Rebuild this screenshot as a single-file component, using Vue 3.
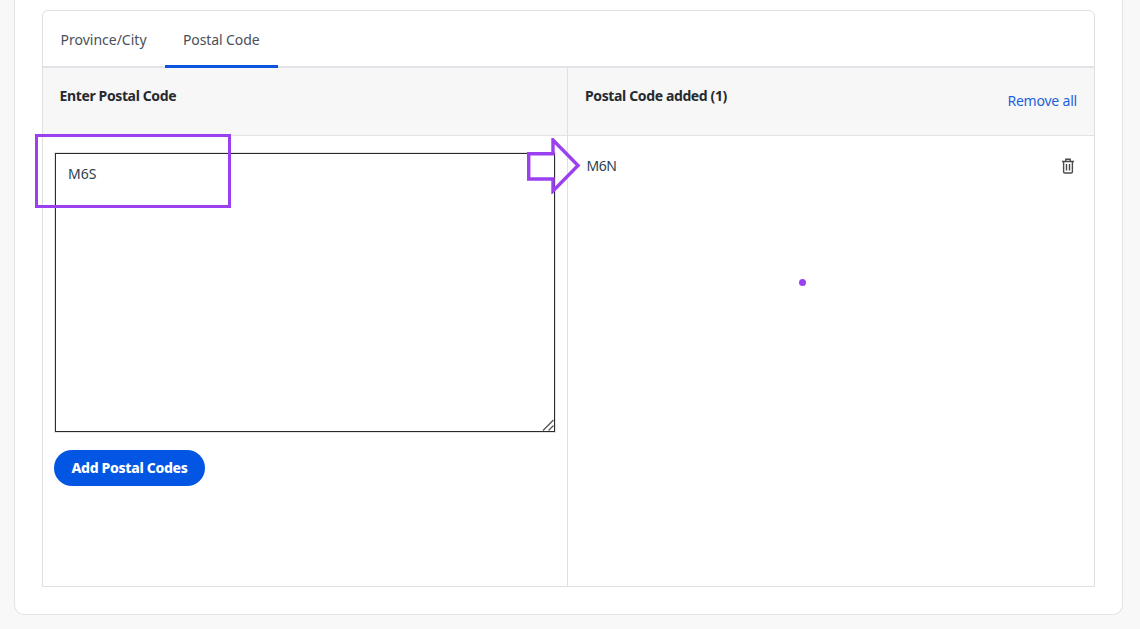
<script setup>
import { ref } from 'vue'
const draft = ref('M6S')
const added = ref(['M6N'])
</script>

<template>
  <div class="page">
    <section class="outer">
      <div class="inner">
        <nav class="tabs">
          <span class="tab first">Province/City</span>
          <span class="tab active">Postal Code</span>
        </nav>
        <div class="cols">
          <div class="col left">
            <header class="head"><strong>Enter Postal Code</strong></header>
            <div class="body">
              <div class="area-wrap">
                <textarea v-model="draft" class="area"></textarea>
                <svg class="grip" width="12" height="12" viewBox="0 0 12 12" fill="none" stroke="#555" stroke-width="1.3">
                  <path d="M1 11.5 11.5 1M6.5 11.5l5-5" />
                </svg>
              </div>
              <button class="add">Add Postal Codes</button>
            </div>
          </div>
          <div class="col right">
            <header class="head">
              <strong>Postal Code added (1)</strong>
              <a class="remove">Remove all</a>
            </header>
            <ul class="list">
              <li v-for="code in added" :key="code" class="row">
                <span class="code">{{ code }}</span>
                <svg class="trash" width="14" height="16" viewBox="0 0 14 16" fill="none" stroke="#4a4a4a" stroke-width="1.4">
                  <path d="M1 3.5h12M4.8 3.3V1.2h4.4v2.1M2.6 3.5v10.2c0 .8.5 1.3 1.3 1.3h6.2c.8 0 1.3-.5 1.3-1.3V3.5M5.5 6v6.5M8.5 6v6.5" />
                </svg>
              </li>
            </ul>
          </div>
        </div>
      </div>
    </section>
    <div class="mark box"></div>
    <svg class="mark arrow" width="54" height="56" viewBox="0 0 54 56" fill="none">
      <path d="M1.7 15.7H26V2L51 27.5 26 53V41H1.7Z" stroke="#9b40f0" stroke-width="3.4" />
    </svg>
    <div class="mark dot"></div>
  </div>
</template>

<style>
html, body { margin: 0; background: #f8f8f8; }
</style>

<style scoped>
.page {
  position: relative;
  height: 629px;
  overflow: hidden;
  box-sizing: border-box;
  padding: 0 17px 0 14px;
  font-family: "Noto Sans", "Open Sans", sans-serif;
  font-size: 14px;
  color: #2b2f36;
}
.outer {
  box-sizing: border-box;
  height: 615px;
  padding: 10px 27px 27px;
  background: #fff;
  border: 1px solid #e3e3e8;
  border-top: 0;
  border-radius: 0 0 10px 10px;
}
.inner {
  display: flex;
  flex-direction: column;
  height: 100%;
  box-sizing: border-box;
  border: 1px solid #e0e0e0;
  border-radius: 6px 6px 0 0;
}
.tabs {
  display: flex;
  height: 57px;
  box-sizing: border-box;
  border-bottom: 2px solid #e2e2e8;
}
.tab {
  padding: 0 18px;
  line-height: 57px;
  height: 57px;
  box-sizing: border-box;
  font-size: 14px;
  color: #4a4f5a;
  letter-spacing: -0.1px;
  white-space: nowrap;
}
.tab.first {
  flex: 0 0 122px;
  padding: 0 0 0 17.5px;
  letter-spacing: 0;
}
.tab.active {
  flex: 0 0 112px;
  border-bottom: 3px solid #0b55dc;
}
.cols {
  flex: 1;
  display: grid;
  grid-template-columns: 524px 1fr;
}
.col { display: flex; flex-direction: column; min-width: 0; }
.right { border-left: 1px solid #e0e0e0; }
.head {
  display: flex;
  justify-content: space-between;
  box-sizing: border-box;
  height: 68px;
  padding: 18px 17px 0 17px;
  background: #f7f7f7;
  border-bottom: 1px solid #e3e3e3;
  font-size: 14px;
  color: #262a30;
}
.left .head { padding-left: 16.5px; }
.head strong { font-weight: 700; line-height: 20px; letter-spacing: -0.37px; }
.remove { margin-top: 5px; color: #1c62dc; line-height: 20px; font-size: 14px; letter-spacing: -0.2px; }
.body { padding: 17px 12px 0 12px; display: flex; flex-direction: column; align-items: flex-start; }
.area-wrap { position: relative; width: 500px; height: 279px; }
.area {
  display: block;
  box-sizing: border-box;
  width: 100%;
  height: 100%;
  padding: 10px 12px;
  border: 1px solid #2b2b2b;
  box-shadow: 0 0 0 1px #e4e4e4;
  background: #fff;
  font: 14px/20px "Noto Sans", "Open Sans", sans-serif;
  color: #2b3f52;
  outline: none;
  resize: none;
}
.grip { position: absolute; right: 1px; bottom: 1px; }
.add {
  margin: 18px 0 0 -1px;
  height: 36px;
  width: 151px;
  padding: 0 0 2px;
  border: 0;
  border-radius: 18px;
  background: #0355e3;
  color: #fff;
  font: 800 14px "Noto Sans", "Open Sans", sans-serif;
  letter-spacing: -0.32px;
}
.list { list-style: none; margin: 0; padding: 0; }
.row {
  display: flex;
  justify-content: space-between;
  align-items: center;
  padding: 20px 19px 0 18.5px;
  line-height: 20px;
  color: #2b3f52;
}
.code { letter-spacing: -0.5px; }
.mark { position: absolute; }
.box {
  left: 35px;
  top: 134px;
  width: 196px;
  height: 74px;
  box-sizing: border-box;
  border: 3px solid #9b40f0;
}
.arrow { left: 527px; top: 138px; }
.dot {
  left: 798.5px;
  top: 278.5px;
  width: 7px;
  height: 7px;
  border-radius: 50%;
  background: #9b40f0;
}
</style>
